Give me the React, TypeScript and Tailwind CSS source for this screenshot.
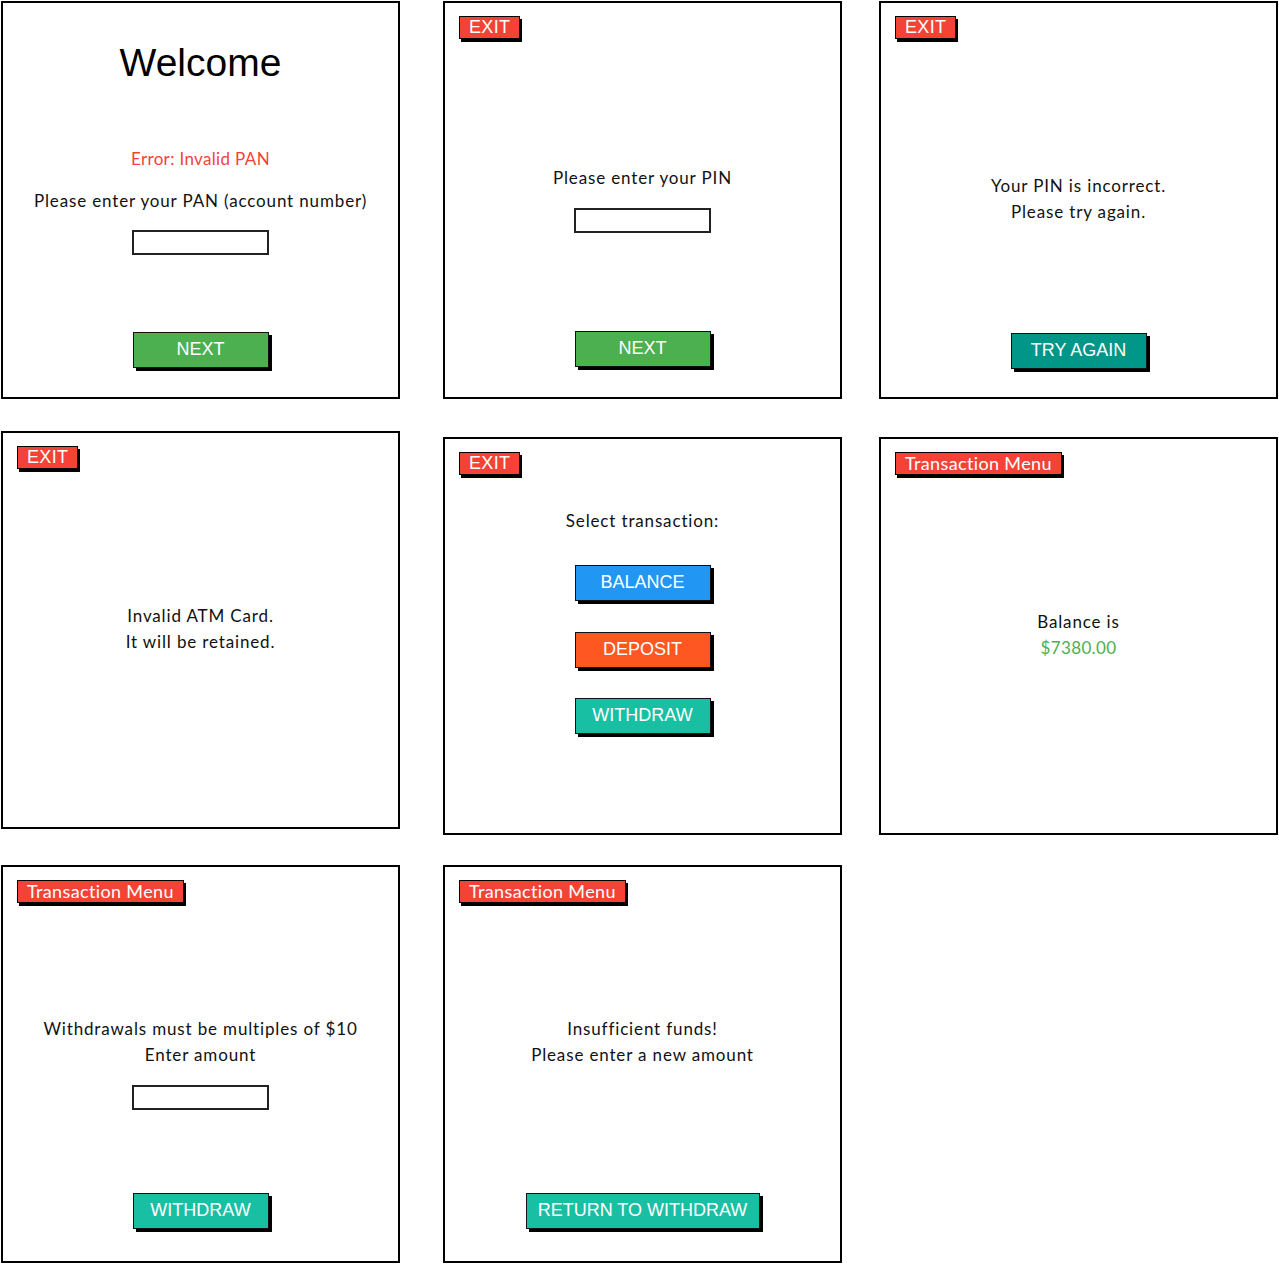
import React from "react";

const body = "font-['Lato','Open_Sans',sans-serif]";
const sans = "font-['Liberation_Sans',Arial,sans-serif]";

function Panel({ badge, children }: { badge?: string; children?: React.ReactNode }) {
  return (
    <div className="relative w-[399px] h-[398px] border-2 border-black bg-white flex flex-col items-center">
      {badge && (
        <span
          className={`absolute top-[13px] left-[14px] bg-[#f44336] text-white border border-black shadow-[2px_3px_0_#000] px-[9px] h-[23px] leading-[21px] text-[18px] tracking-[0.02em] ${
            badge === "EXIT" ? sans : body
          }`}
        >
          {badge}
        </span>
      )}
      {children}
    </div>
  );
}

function Btn({ label, color, w = "w-[136px]", mt }: { label: string; color: string; w?: string; mt: string }) {
  return (
    <div
      className={`${mt} ${w} h-[36px] ${color} border-[1.5px] border-[#111] shadow-[3px_3px_0_#000] text-white text-[18px] leading-[33px] text-center ${sans}`}
    >
      {label}
    </div>
  );
}

function Field({ mt }: { mt: string }) {
  return <div className={`${mt} w-[137px] h-[25px] border-2 border-[#222] bg-white`} />;
}

function Line({ children, className = "" }: { children: React.ReactNode; className?: string }) {
  return (
    <p className={`text-[17px] leading-[26px] tracking-[0.05em] text-[#111] text-center whitespace-nowrap ${body} ${className}`}>
      {children}
    </p>
  );
}

export default function App() {
  return (
    <div className="w-[1279px] h-[1264px] bg-white pt-[1px] pl-[1px] flex">
      {/* column 1 */}
      <div className="flex flex-col">
        <Panel>
          <h1 className={`mt-[40px] text-[39px] leading-[40px] text-black ${sans}`}>Welcome</h1>
          <Line className="mt-[63px] !text-[#f44336] !tracking-[0.02em]">Error: Invalid PAN</Line>
          <Line className="mt-[16px]">Please enter your PAN (account number)</Line>
          <Field mt="mt-[16px]" />
          <Btn label="NEXT" color="bg-[#4caf50]" mt="mt-[77px]" />
        </Panel>
        <div className="mt-[32px]">
          <Panel badge="EXIT">
            <div className="mt-[170px]">
              <Line>Invalid ATM Card.</Line>
              <Line>It will be retained.</Line>
            </div>
          </Panel>
        </div>
        <div className="mt-[36px]">
          <Panel badge="Transaction Menu">
            <div className="mt-[149px]">
              <Line>Withdrawals must be multiples of $10</Line>
              <Line>Enter amount</Line>
            </div>
            <Field mt="mt-[17px]" />
            <Btn label="WITHDRAW" color="bg-[#19bfa3]" mt="mt-[83px]" />
          </Panel>
        </div>
      </div>

      {/* column 2 */}
      <div className="flex flex-col ml-[43px]">
        <Panel badge="EXIT">
          <Line className="mt-[162px]">Please enter your PIN</Line>
          <Field mt="mt-[17px]" />
          <Btn label="NEXT" color="bg-[#4caf50]" mt="mt-[98px]" />
        </Panel>
        <div className="mt-[38px]">
          <Panel badge="EXIT">
            <Line className="mt-[69px]">Select transaction:</Line>
            <Btn label="BALANCE" color="bg-[#2196f3]" mt="mt-[31px]" />
            <Btn label="DEPOSIT" color="bg-[#ff5722]" mt="mt-[31px]" />
            <Btn label="WITHDRAW" color="bg-[#19bfa3]" mt="mt-[30px]" />
          </Panel>
        </div>
        <div className="mt-[30px]">
          <Panel badge="Transaction Menu">
            <div className="mt-[149px]">
              <Line>Insufficient funds!</Line>
              <Line>Please enter a new amount</Line>
            </div>
            <Btn label="RETURN TO WITHDRAW" color="bg-[#19bfa3]" w="w-[234px]" mt="mt-[125px]" />
          </Panel>
        </div>
      </div>

      {/* column 3 */}
      <div className="flex flex-col ml-[37px]">
        <Panel badge="EXIT">
          <div className="mt-[170px]">
            <Line>Your PIN is incorrect.</Line>
            <Line>Please try again.</Line>
          </div>
          <Btn label="TRY AGAIN" color="bg-[#009688]" mt="mt-[108px]" />
        </Panel>
        <div className="mt-[38px]">
          <Panel badge="Transaction Menu">
            <div className="mt-[170px]">
              <Line>Balance is</Line>
              <Line className="!text-[#4caf50] !tracking-[0.02em]">$7380.00</Line>
            </div>
          </Panel>
        </div>
      </div>
    </div>
  );
}
